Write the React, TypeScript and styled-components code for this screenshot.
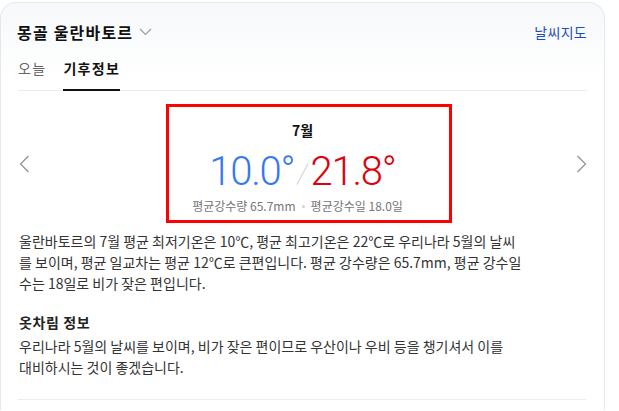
import React from 'react'
import styled, { createGlobalStyle } from 'styled-components'

const GlobalStyle = createGlobalStyle`
  body {
    margin: 0;
    background: #fff;
    font-family: "Noto Sans CJK KR", "Noto Sans", sans-serif;
  }
`

const Card = styled.div`
  width: 605px;
  min-height: 408px;
  margin-top: 2px;
  border: 1px solid #e6e8ec;
  border-bottom: none;
  border-radius: 16px 16px 0 0;
  background: linear-gradient(#f6f8fa, #ffffff 75px);
  box-sizing: border-box;
`

const Header = styled.div`
  display: flex;
  align-items: center;
  justify-content: space-between;
  padding: 16px 17px 0 16px;
  height: 41px;
  box-sizing: border-box;
`

const Title = styled.h2`
  margin: 0;
  display: flex;
  align-items: center;
  gap: 6px;
  font-size: 16px;
  font-weight: 700;
  color: #111;
  line-height: 22px;
  letter-spacing: 1.2px;
`

const MapLink = styled.a`
  font-size: 14px;
  color: #1d4ec6;
  text-decoration: none;
  line-height: 20px;
  letter-spacing: 0.3px;
`

const TabBar = styled.div`
  display: flex;
  gap: 17px;
  margin: 0 17px;
  border-bottom: 1px solid #ebedf0;
`

const Tab = styled.div<{ $active?: boolean }>`
  padding: 14px 0 11px;
  font-size: 14px;
  line-height: 20px;
  letter-spacing: 1.3px;
  font-weight: ${p => (p.$active ? 700 : 400)};
  color: ${p => (p.$active ? '#111' : '#666')};
  border-bottom: 2px solid ${p => (p.$active ? '#111' : 'transparent')};
  margin-bottom: -1px;
`

const Slider = styled.div`
  display: flex;
  align-items: center;
  margin: 13px 17px 0;
  height: 119px;
`

const Arrow = styled.button`
  width: 12px;
  height: 20px;
  padding: 0;
  border: none;
  background: none;
  display: flex;
  align-items: center;
  justify-content: center;
`

const Summary = styled.div`
  position: relative;
  flex: 1;
  height: 100%;
  display: flex;
  flex-direction: column;
  align-items: center;
`

const Highlight = styled.div`
  position: absolute;
  left: 136px;
  top: 0;
  width: 286px;
  height: 119px;
  border: 3px solid #f00;
  box-sizing: border-box;
  pointer-events: none;
`

const Month = styled.div`
  margin-top: 16px;
  font-size: 14px;
  font-weight: 700;
  line-height: 20px;
  color: #111;
`

const Temps = styled.div`
  display: flex;
  align-items: center;
  margin-top: 10px;
  height: 42px;
  font-family: Roboto, "Liberation Sans", sans-serif;
  font-weight: 300;
  font-size: 40px;
  letter-spacing: -1.2px;
`

const Temp = styled.span<{ $color: string }>`
  color: ${p => p.$color};
`

const Slash = styled.span`
  display: inline-block;
  width: 1px;
  height: 24px;
  margin: 6px 8px 0 7px;
  background: #d0d0d0;
  transform: rotate(28deg);
`

const Info = styled.div`
  display: flex;
  align-items: center;
  gap: 6px;
  margin-top: 6px;
  margin-right: 10px;
  font-size: 12px;
  line-height: 16px;
  color: #767676;
`

const Dot = styled.span`
  width: 3px;
  height: 3px;
  border-radius: 50%;
  background: #d3d3d3;
`

const Body = styled.div`
  padding: 8px 17px 0 18px;
`

const Paragraph = styled.p`
  margin: 0;
  font-size: 14px;
  line-height: 21px;
  color: #333;
`

const SubTitle = styled.h3`
  margin: 18px 0 4px;
  font-size: 14px;
  line-height: 20px;
  font-weight: 700;
  color: #222;
  letter-spacing: 0.6px;
`

const Divider = styled.div`
  margin: 21px 18px 0 17px;
  height: 1px;
  background: #ebedf0;
`

const ChevronDown = () => (
  <svg width="13" height="8" viewBox="0 0 13 8" fill="none">
    <path d="M1 1l5.5 5.5L12 1" stroke="#9a9da3" strokeWidth="1.2" />
  </svg>
)

const ChevronSide = ({ right }: { right?: boolean }) => (
  <svg width="11" height="18" viewBox="0 0 11 18" fill="none">
    <path
      d={right ? 'M1.5 1l8 8-8 8' : 'M9.5 1l-8 8 8 8'}
      stroke="#8c919b"
      strokeWidth="1.2"
    />
  </svg>
)

const App = () => {
  return (
    <>
      <GlobalStyle />
      <Card>
        <Header>
          <Title>
            몽골 울란바토르 <ChevronDown />
          </Title>
          <MapLink href="#">날씨지도</MapLink>
        </Header>
        <TabBar>
          <Tab>오늘</Tab>
          <Tab $active>기후정보</Tab>
        </TabBar>
        <Slider>
          <Arrow>
            <ChevronSide />
          </Arrow>
          <Summary>
            <Month>7월</Month>
            <Temps>
              <Temp $color="#3478f6">10.0°</Temp>
              <Slash />
              <Temp $color="#e0000b">21.8°</Temp>
            </Temps>
            <Info>
              <span>평균강수량 65.7mm</span>
              <Dot />
              <span>평균강수일 18.0일</span>
            </Info>
            <Highlight />
          </Summary>
          <Arrow>
            <ChevronSide right />
          </Arrow>
        </Slider>
        <Body>
          <Paragraph>
            울란바토르의 7월 평균 최저기온은 10℃, 평균 최고기온은 22℃로 우리나라 5월의 날씨
            <br />
            를 보이며, 평균 일교차는 평균 12℃로 큰편입니다. 평균 강수량은 65.7mm, 평균 강수일
            <br />
            수는 18일로 비가 잦은 편입니다.
          </Paragraph>
          <SubTitle>옷차림 정보</SubTitle>
          <Paragraph>
            우리나라 5월의 날씨를 보이며, 비가 잦은 편이므로 우산이나 우비 등을 챙기셔서 이를
            <br />
            대비하시는 것이 좋겠습니다.
          </Paragraph>
        </Body>
        <Divider />
      </Card>
    </>
  )
}

export default App
